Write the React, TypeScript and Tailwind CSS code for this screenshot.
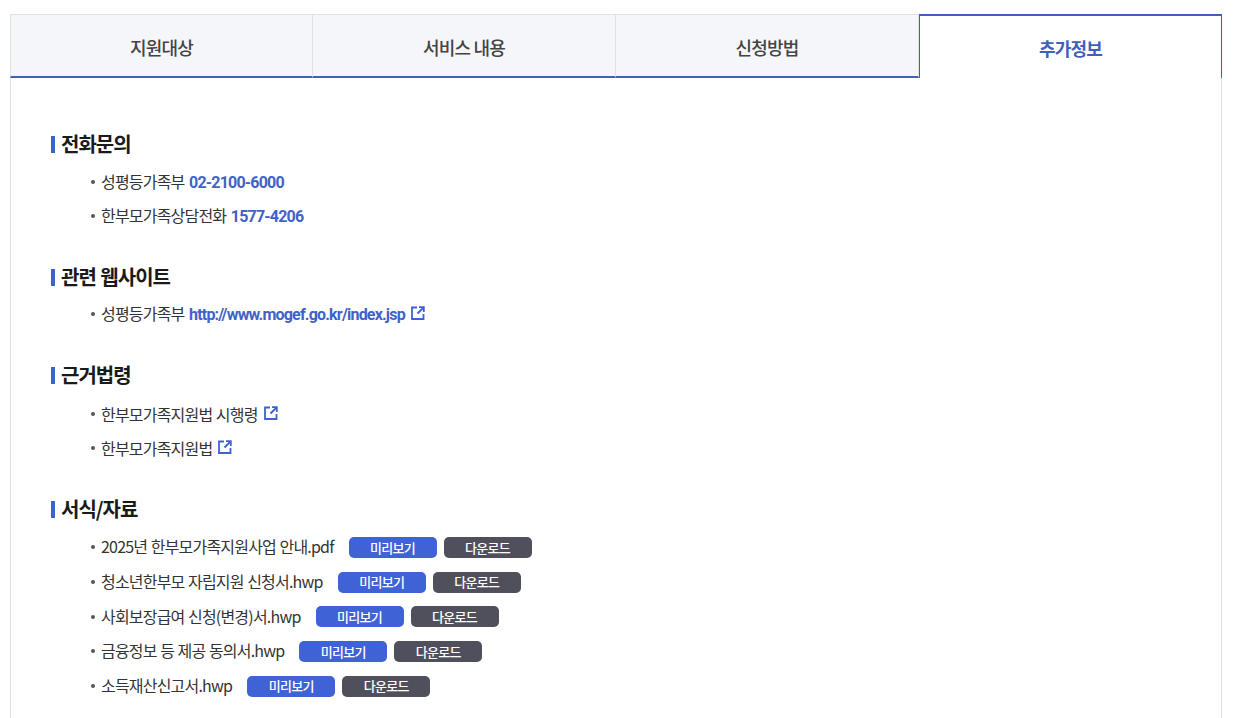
import React from 'react'

const TABS = ['지원대상', '서비스 내용', '신청방법', '추가정보']

const FILES = [
  '2025년 한부모가족지원사업 안내.pdf',
  '청소년한부모 자립지원 신청서.hwp',
  '사회보장급여 신청(변경)서.hwp',
  '금융정보 등 제공 동의서.hwp',
  '소득재산신고서.hwp',
]

function LinkIcon() {
  return (
    <svg width="14" height="14" viewBox="0 0 14 14" fill="none" className="ml-[6px] mb-[6px] inline-block" stroke="#3f62d1">
      <path d="M6 1.5H1V13H12.5V8" strokeWidth="1.8" />
      <path d="M8 1.2H12.8V6" strokeWidth="1.8" />
      <path d="M12.6 1.4L6.5 7.5" strokeWidth="2" />
    </svg>
  )
}

function Heading({ children }: { children: React.ReactNode }) {
  return (
    <h3 className="flex h-[30px] items-center text-[20px] font-bold leading-[30px] tracking-[-1px] text-[#1a1a1a] [word-spacing:1px]">
      <span className="mr-[6px] h-[17px] w-[4px] bg-[#3f62c8]" />
      {children}
    </h3>
  )
}

function Item({ children }: { children: React.ReactNode }) {
  return (
    <li className="flex h-[34px] items-center text-[16px] tracking-[-0.8px] text-[#333] [word-spacing:0.7px]">
      <span className="mr-[6px] ml-[40px] h-[4px] w-[4px] rounded-full bg-[#555]" />
      <span>{children}</span>
    </li>
  )
}

function Strong({ children }: { children: React.ReactNode }) {
  return <b className="ml-[1px] font-['Roboto'] font-bold text-[#3f62c8]">{children}</b>
}

export default function App() {
  return (
    <div className="min-h-[718px] bg-white pl-[10px] pr-[11px] pt-[14px] font-['Noto_Sans_CJK_KR',sans-serif]">
      {/* Tabs */}
      <div className="grid h-[64px] grid-cols-[303px_303px_303px_303px]">
        {TABS.map((tab, i) =>
          i === 3 ? (
            <div
              key={tab}
              className="flex items-center justify-center border-x-[1px] border-t-2 border-[#3f62b8] bg-white pt-[2px] text-[18px] font-bold tracking-[-0.8px] text-[#3f62b8]"
            >
              {tab}
            </div>
          ) : (
            <div
              key={tab}
              className="flex items-center justify-center border-t border-b-2 border-r border-t-[#e1e1e1] border-r-[#e1e1e1] border-b-[#3f62b8] bg-[#f5f6fa] pt-[4px] text-[18px] font-medium tracking-[-0.8px] text-[#444] first:border-l first:border-l-[#e1e1e1]"
            >
              {tab}
            </div>
          )
        )}
      </div>

      {/* Content */}
      <div className="h-[640px] border-x border-[#e1e1e1] px-[40px] pt-[51px]">
        <Heading>전화문의</Heading>
        <ul className="mt-[6px]">
          <Item>
            성평등가족부 <Strong>02-2100-6000</Strong>
          </Item>
          <Item>
            한부모가족상담전화 <Strong>1577-4206</Strong>
          </Item>
        </ul>

        <div className="mt-[29px]">
          <Heading>관련 웹사이트</Heading>
        </div>
        <ul className="mt-[5px]">
          <Item>
            성평등가족부 <Strong>http://www.mogef.go.kr/index.jsp</Strong>
            <LinkIcon />
          </Item>
        </ul>

        <div className="mt-[29px]">
          <Heading>근거법령</Heading>
        </div>
        <ul className="mt-[7px]">
          <Item>
            한부모가족지원법 시행령
            <LinkIcon />
          </Item>
          <Item>
            한부모가족지원법
            <LinkIcon />
          </Item>
        </ul>

        <div className="mt-[29px]">
          <Heading>서식/자료</Heading>
        </div>
        <ul className="mt-[6px]">
          {FILES.map((file) => (
            <li key={file} className="flex h-[34.7px] items-center text-[16px] tracking-[-0.8px] text-[#333] [word-spacing:0.7px]">
              <span className="mr-[6px] ml-[40px] h-[4px] w-[4px] rounded-full bg-[#555]" />
              <span className="pb-[2px]">{file}</span>
              <button className="ml-[15px] flex h-[21px] w-[88px] items-center justify-center rounded-[5px] bg-[#3f62d6] text-[13px] font-medium tracking-[-0.7px] text-white">
                미리보기
              </button>
              <button className="ml-[7px] flex h-[21px] w-[88px] items-center justify-center rounded-[5px] bg-[#50505c] text-[13px] font-medium tracking-[-0.7px] text-white">
                다운로드
              </button>
            </li>
          ))}
        </ul>
      </div>
    </div>
  )
}
